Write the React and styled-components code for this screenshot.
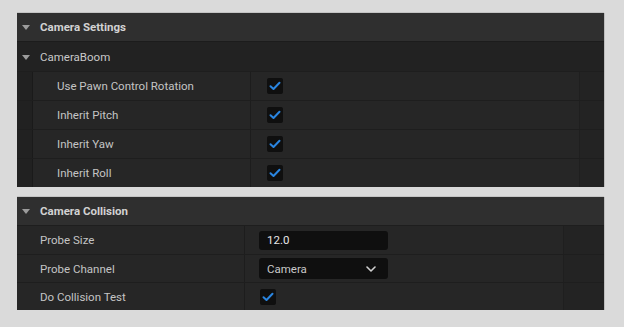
import React from "react";
import styled, { createGlobalStyle } from "styled-components";

const GlobalStyle = createGlobalStyle`
  html, body {
    margin: 0;
    padding: 0;
    background: #dadada;
  }
  body {
    font-family: Roboto, "Liberation Sans", sans-serif;
  }
`;

const Page = styled.div`
  display: flex;
  flex-direction: column;
  gap: 10px;
  padding: 13px 20px 0 17px;
  width: 587px;
`;

const Panel = styled.div`
  display: flex;
  flex-direction: column;
  background: #262626;
  box-shadow: 1px 0 0 #bdbdbd, 0 -1px 0 #c4c4c4;
`;

const SectionHeader = styled.div`
  display: flex;
  align-items: center;
  height: 28px;
  background: #2f2f2f;
  color: #d2d2d2;
  font-size: 11.5px;
  font-weight: 700;
  padding-left: 5px;
`;

const CategoryRow = styled.div`
  display: flex;
  align-items: center;
  height: 29px;
  background: #222222;
  border-top: 1px solid #1c1c1c;
  color: #c8c8c8;
  font-size: 11.5px;
  padding-left: 5px;
`;

const Arrow = styled.span`
  width: 0;
  height: 0;
  border-left: 4.5px solid transparent;
  border-right: 4.5px solid transparent;
  border-top: 5px solid #9c9c9c;
  margin-right: 10px;
  margin-top: 1px;
`;

const PropRow = styled.div`
  display: grid;
  grid-template-columns: ${(p) => p.$cols};
  height: ${(p) => p.$h || 29}px;
  border-top: 1px solid #1e1e1e;
  box-sizing: border-box;
`;

const Indent = styled.div`
  background: #212121;
  border-right: 1px solid #1a1a1a;
`;

const Label = styled.div`
  display: flex;
  align-items: center;
  padding-left: ${(p) => p.$pad}px;
  color: #c4c4c4;
  font-size: 11.5px;
  border-right: 1px solid #1d1d1d;
`;

const Value = styled.div`
  display: flex;
  align-items: center;
  padding-left: ${(p) => p.$pad}px;
  border-right: 1px solid #1f1f1f;
`;

const Extra = styled.div`
  background: #232323;
`;

const Check = styled.div`
  width: 16px;
  height: 16px;
  border-radius: 2px;
  background: #0f0f0f;
  display: flex;
  align-items: center;
  justify-content: center;
`;

const Field = styled.div`
  display: flex;
  align-items: center;
  justify-content: space-between;
  width: 129px;
  height: ${(p) => p.$h}px;
  box-sizing: border-box;
  padding: 0 12px 0 8px;
  border-radius: 3px;
  background: #0f0f0f;
  color: ${(p) => p.$color};
  font-size: 11.5px;
`;

const CheckBox = () => (
  <Check>
    <svg width="12" height="10" viewBox="0 0 12 10">
      <path
        d="M1.5 5.2 L4.5 8 L10.5 1.8"
        fill="none"
        stroke="#2a85e0"
        strokeWidth="2"
        strokeLinecap="round"
        strokeLinejoin="round"
      />
    </svg>
  </Check>
);

const Chevron = () => (
  <svg width="10" height="6" viewBox="0 0 10 6">
    <path
      d="M1 1 L5 5 L9 1"
      fill="none"
      stroke="#d0d0d0"
      strokeWidth="1.6"
      strokeLinecap="round"
      strokeLinejoin="round"
    />
  </svg>
);

const boomProps = [
  "Use Pawn Control Rotation",
  "Inherit Pitch",
  "Inherit Yaw",
  "Inherit Roll",
];

const boomCols = "16px 218px 329px 24px";
const collisionCols = "228px 319px 40px";

export default function App() {
  return (
    <>
      <GlobalStyle />
      <Page>
        <Panel>
          <SectionHeader>
            <Arrow />
            Camera Settings
          </SectionHeader>
          <CategoryRow>
            <Arrow />
            CameraBoom
          </CategoryRow>
          {boomProps.map((name) => (
            <PropRow key={name} $cols={boomCols}>
              <Indent />
              <Label $pad={24}>{name}</Label>
              <Value $pad={16}>
                <CheckBox />
              </Value>
              <Extra />
            </PropRow>
          ))}
        </Panel>

        <Panel>
          <SectionHeader>
            <Arrow />
            Camera Collision
          </SectionHeader>
          <PropRow $cols={collisionCols}>
            <Label $pad={23}>Probe Size</Label>
            <Value $pad={14}>
              <Field $h={19} $color="#e6e6e6">12.0</Field>
            </Value>
            <Extra />
          </PropRow>
          <PropRow $cols={collisionCols} $h={28}>
            <Label $pad={23}>Probe Channel</Label>
            <Value $pad={14}>
              <Field $h={21} $color="#c8c8c8">
                Camera
                <Chevron />
              </Field>
            </Value>
            <Extra />
          </PropRow>
          <PropRow $cols={collisionCols} $h={28}>
            <Label $pad={23}>Do Collision Test</Label>
            <Value $pad={15}>
              <CheckBox />
            </Value>
            <Extra />
          </PropRow>
        </Panel>
      </Page>
    </>
  );
}
